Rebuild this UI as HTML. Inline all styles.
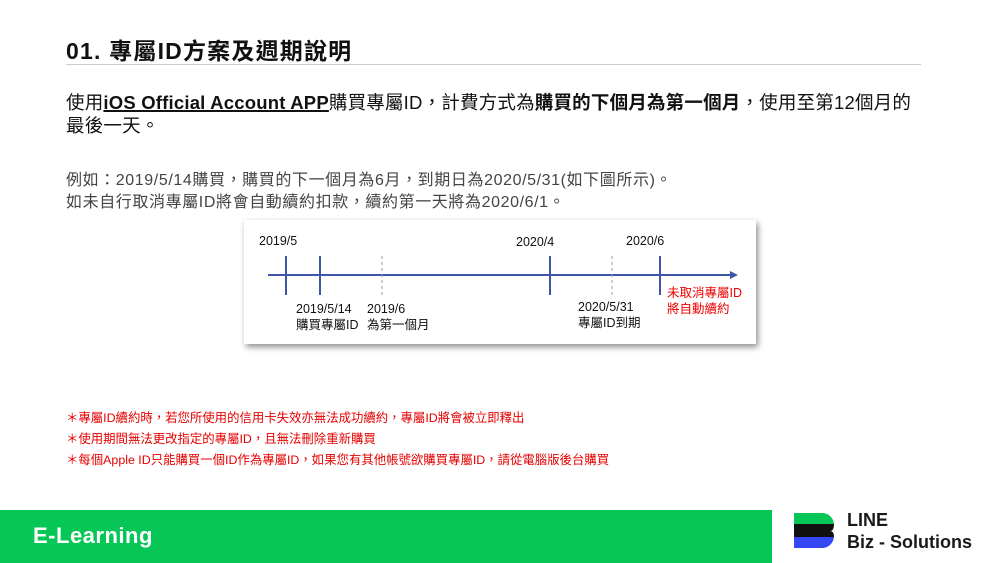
<!DOCTYPE html>
<html><head><meta charset="utf-8"><style>
*{margin:0;padding:0}
body{width:1000px;height:563px;position:relative;background:#fff;overflow:hidden;font-family:"Liberation Sans","Noto Sans CJK TC",sans-serif;color:#111}
.a{position:absolute;white-space:nowrap}
</style></head><body>
<div class="a" style="left:66px;top:32px;font-size:23px;font-weight:bold;letter-spacing:1.2px">01. 專屬ID方案及週期說明</div>
<div class="a" style="left:66px;top:64px;width:855px;height:1px;background:#ccc"></div>
<div class="a" style="left:66px;top:91px;font-size:18.5px;line-height:23px;letter-spacing:0.2px">使用<b style="text-decoration:underline;text-decoration-thickness:2px">iOS Official Account APP</b>購買專屬ID，計費方式為<b>購買的下個月為第一個月</b>，使用至第12個月的<br>最後一天。</div>
<div class="a" style="left:66px;top:170px;font-size:16px;line-height:22px;color:#444;letter-spacing:0.6px">例如：2019/5/14購買，購買的下一個月為6月，到期日為2020/5/31(如下圖所示)。<br>如未自行取消專屬ID將會自動續約扣款，續約第一天將為2020/6/1。</div>
<div class="a" style="left:244px;top:220px;width:512px;height:124px;background:#fff;box-shadow:2px 3px 6px rgba(0,0,0,.45)">
<svg width="512" height="124" style="position:absolute;left:0;top:0">
<g stroke="#3d56a6" stroke-width="2"><line x1="24" y1="55" x2="488" y2="55"/><line x1="42" y1="36" x2="42" y2="75"/><line x1="76" y1="36" x2="76" y2="75"/><line x1="306" y1="36" x2="306" y2="75"/><line x1="416" y1="36" x2="416" y2="75"/></g>
<g stroke="#99a" stroke-width="1" stroke-dasharray="3,3"><line x1="138" y1="36" x2="138" y2="75"/><line x1="368" y1="36" x2="368" y2="75"/></g>
<polygon points="486,51 494,55 486,59" fill="#3d56a6"/>
</svg>
<div class="a" style="left:15px;top:14px;font-size:12.5px">2019/5</div>
<div class="a" style="left:272px;top:15px;font-size:12.5px">2020/4</div>
<div class="a" style="left:382px;top:14px;font-size:12.5px">2020/6</div>
<div class="a" style="left:52px;top:81px;font-size:12.5px;line-height:16px">2019/5/14<br>購買專屬ID</div>
<div class="a" style="left:123px;top:81px;font-size:12.5px;line-height:16px">2019/6<br>為第一個月</div>
<div class="a" style="left:334px;top:79px;font-size:12.5px;line-height:16px">2020/5/31<br>專屬ID到期</div>
<div class="a" style="left:423px;top:65px;font-size:12.5px;line-height:16px;color:#e00">未取消專屬ID<br>將自動續約</div>
</div>
<div class="a" style="left:66px;top:408px;font-size:12.4px;line-height:21px;color:#e60000">＊專屬ID續約時，若您所使用的信用卡失效亦無法成功續約，專屬ID將會被立即釋出<br>＊使用期間無法更改指定的專屬ID，且無法刪除重新購買<br>＊每個Apple ID只能購買一個ID作為專屬ID，如果您有其他帳號欲購買專屬ID，請從電腦版後台購買</div>
<div class="a" style="left:0;top:510px;width:772px;height:53px;background:#06c755"></div>
<div class="a" style="left:33px;top:523px;font-size:22px;font-weight:bold;color:#fff;letter-spacing:0.5px">E-Learning</div>
<svg class="a" style="left:794px;top:513px" width="42" height="36"><path d="M0 0H28A12 12 0 0 1 40 11H0Z" fill="#06c755"/><path d="M0 11H40Q40 18 36 18Q40 18 40 24H0Z" fill="#111"/><path d="M0 24H40A12 12 0 0 1 28 35H0Z" fill="#3548f5"/></svg>
<div class="a" style="left:847px;top:509px;font-size:18px;font-weight:bold;line-height:22px;color:#1a1a1a">LINE<br>Biz - Solutions</div>
</body></html>
